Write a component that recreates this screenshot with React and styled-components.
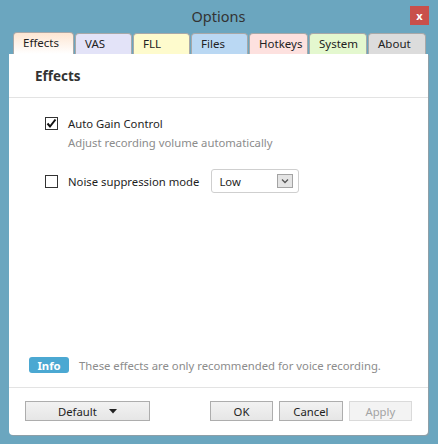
import React, { useState } from "react";
import styled, { createGlobalStyle } from "styled-components";

const Global = createGlobalStyle`
  html, body { margin: 0; padding: 0; }
  body { font-family: "Noto Sans", "Open Sans", sans-serif; font-size: 11.3px; color: #1e1e1e; }
`;

const Frame = styled.div`
  width: 438px;
  height: 444px;
  box-sizing: border-box;
  background: #6ba6bf;
  display: flex;
  flex-direction: column;
  padding: 0 10px 9px 9px;
`;

const TitleBar = styled.div`
  height: 33px;
  display: flex;
  align-items: center;
  justify-content: center;
  position: relative;
  font-size: 14.5px;
  color: #333;
  padding-bottom: 2px;
  box-sizing: border-box;
`;

const Close = styled.div`
  position: absolute;
  right: -1px;
  top: 6px;
  width: 19px;
  height: 19px;
  background: #c9504b;
  color: #fff;
  font-weight: bold;
  font-size: 11px;
  display: flex;
  align-items: center;
  justify-content: center;
`;

const TabRow = styled.div`
  display: flex;
  padding-left: 4px;
  height: 21px;
  align-items: flex-end;
`;

const Tab = styled.div`
  box-sizing: border-box;
  width: ${p => p.w}px;
  height: ${p => (p.active ? 22 : 21)}px;
  margin-right: 1px;
  border: 1px solid #a8a8a8;
  border-bottom: none;
  border-radius: 4px 4px 0 0;
  background: ${p => p.bg};
  padding: 2px 0 0 9px;
  font-size: 11.5px;
  color: #222;
  position: relative;
  z-index: ${p => (p.active ? 2 : 1)};
`;

const Panel = styled.div`
  flex: 1;
  background: #fff;
  border-radius: 0 0 4px 4px;
  display: flex;
  flex-direction: column;
  box-shadow: 1px 1px 0 #8d9fa8;
`;

const Header = styled.div`
  height: 44px;
  box-sizing: border-box;
  border-bottom: 1px solid #e3e3e3;
  padding: 13px 0 0 26px;
  font-size: 13.5px;
  font-weight: bold;
  color: #333;
`;

const Body = styled.div`
  flex: 1;
  padding: 18px 0 0 36px;
  display: flex;
  flex-direction: column;
`;

const Option = styled.label`
  display: flex;
  align-items: center;
  gap: 10px;
  height: ${p => p.h || 14}px;
  margin-top: ${p => p.mt || 0}px;
  cursor: default;
`;

const Box = styled.span`
  width: 13px;
  height: 13px;
  box-sizing: border-box;
  border: 1px solid #333;
  background: #fff;
  display: flex;
  align-items: center;
  justify-content: center;
`;

const Hint = styled.div`
  color: #8c8c8c;
  padding-left: 23px;
  margin-top: 5px;
`;

const Select = styled.div`
  margin-left: 2px;
  width: 88px;
  height: 24px;
  box-sizing: border-box;
  border: 1px solid #cfcfcf;
  border-radius: 3px;
  display: flex;
  align-items: center;
  justify-content: space-between;
  padding: 0 5px 0 7px;
`;

const Arrow = styled.span`
  width: 16px;
  height: 14px;
  box-sizing: border-box;
  border: 1px solid #a3a3a3;
  background: #e4e4e4;
  display: flex;
  align-items: center;
  justify-content: center;
`;

const InfoRow = styled.div`
  display: flex;
  align-items: center;
  gap: 10px;
  padding: 0 0 14px 20px;
  color: #8c8c8c;
  border-bottom: 1px solid #e3e3e3;
`;

const Badge = styled.span`
  background: #4ba8d2;
  color: #fff;
  font-weight: bold;
  border-radius: 3px;
  width: 40px;
  height: 16px;
  display: flex;
  align-items: center;
  justify-content: center;
`;

const Footer = styled.div`
  display: flex;
  gap: 6px;
  padding: 13px 16px 14px 16px;
`;

const Button = styled.div`
  width: ${p => p.w}px;
  height: 20px;
  box-sizing: border-box;
  border: 1px solid ${p => (p.disabled ? "#dadada" : "#adadad")};
  background: ${p => (p.disabled ? "#f3f3f3" : "linear-gradient(#f2f2f2, #e6e6e6)")};
  color: ${p => (p.disabled ? "#a3a3a3" : "#1e1e1e")};
  display: flex;
  align-items: center;
  justify-content: center;
  gap: 12px;
  margin-left: ${p => p.ml || 0}px;
`;

const tabs = [
  { label: "Effects", w: 61, bg: "linear-gradient(#fde6d2, #fff)" },
  { label: "VAS", w: 57, bg: "#e3e3f8" },
  { label: "FLL", w: 57, bg: "#fefbcd" },
  { label: "Files", w: 57, bg: "#bad8f3" },
  { label: "Hotkeys", w: 59, bg: "#fde1df" },
  { label: "System", w: 58, bg: "#e4f8cf" },
  { label: "About", w: 58, bg: "#dcdcdc" },
];

export default function App() {
  const [agc, setAgc] = useState(true);
  return (
    <>
      <Global />
      <Frame>
        <TitleBar>
          Options
          <Close>x</Close>
        </TitleBar>
        <TabRow>
          {tabs.map((t, i) => (
            <Tab key={t.label} w={t.w} bg={t.bg} active={i === 0}>
              {t.label}
            </Tab>
          ))}
        </TabRow>
        <Panel>
          <Header>Effects</Header>
          <Body>
            <Option onClick={() => setAgc(!agc)}>
              <Box>
                {agc && (
                  <svg width="11" height="11" viewBox="0 0 11 11">
                    <path d="M1.5 5.5 L4 8.5 L9.5 1.5" fill="none" stroke="#111" strokeWidth="2" />
                  </svg>
                )}
              </Box>
              Auto Gain Control
            </Option>
            <Hint>Adjust recording volume automatically</Hint>
            <Option h={24} mt={19}>
              <Box />
              Noise suppression mode
              <Select>
                Low
                <Arrow>
                  <svg width="8" height="6" viewBox="0 0 8 6">
                    <path d="M1 1.5 L4 4.5 L7 1.5" fill="none" stroke="#555" strokeWidth="1.3" />
                  </svg>
                </Arrow>
              </Select>
            </Option>
          </Body>
          <InfoRow>
            <Badge>Info</Badge>
            These effects are only recommended for voice recording.
          </InfoRow>
          <Footer>
            <Button w={126}>
              Default
              <svg width="8" height="5" viewBox="0 0 8 5">
                <path d="M0 0 L8 0 L4 4.5 Z" fill="#222" />
              </svg>
            </Button>
            <Button w={64} ml={54}>OK</Button>
            <Button w={64}>Cancel</Button>
            <Button w={64} disabled>Apply</Button>
          </Footer>
        </Panel>
      </Frame>
    </>
  );
}
